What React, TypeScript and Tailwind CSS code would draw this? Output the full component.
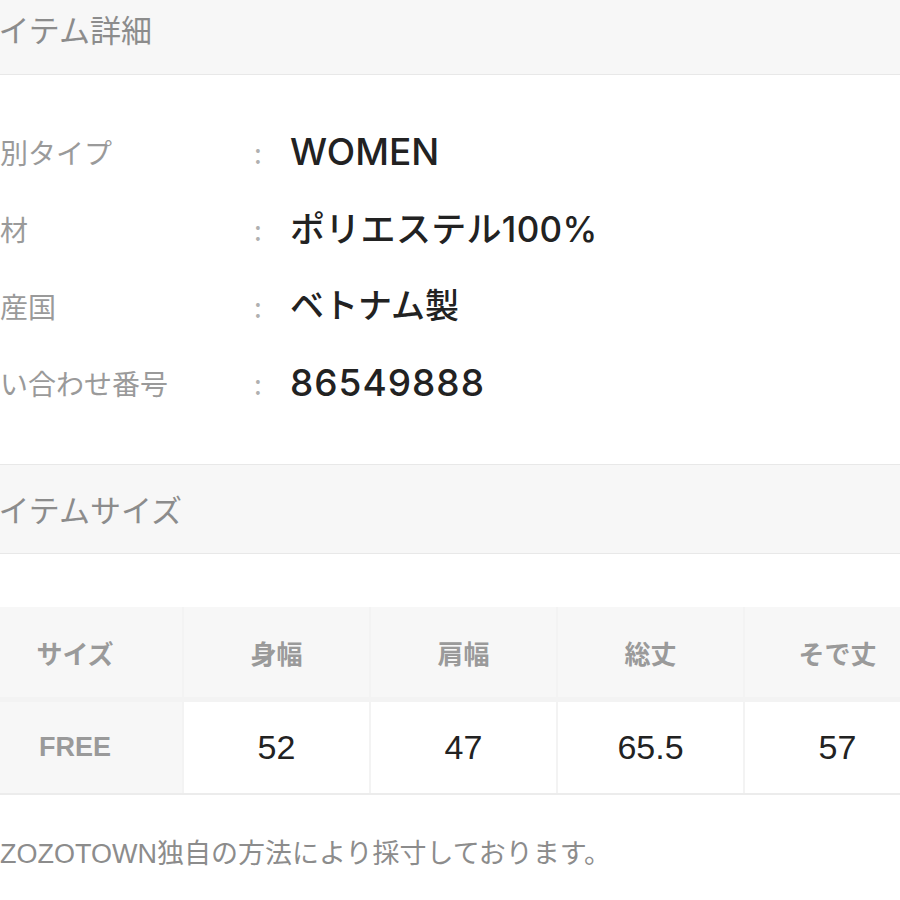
import React from "react";

const font = { fontFamily: '"Noto Sans CJK JP", "Liberation Sans", sans-serif' };
const latinFirst = { fontFamily: '"Liberation Sans", "Noto Sans CJK JP", sans-serif' };
const valFont = { fontFamily: 'Inter, "Noto Sans CJK JP", sans-serif' };

const rows: { k: string; v: string; cls: string }[] = [
  { k: "性別タイプ", v: "WOMEN", cls: "text-[37px] tracking-[0px]" },
  { k: "素材", v: "ポリエステル100%", cls: "text-[35px] tracking-[0.3px]" },
  { k: "原産国", v: "ベトナム製", cls: "text-[34px] tracking-[0px]" },
  { k: "問い合わせ番号", v: "86549888", cls: "text-[37px] tracking-[1px]" },
];

const heads = ["身幅", "肩幅", "総丈", "そで丈"];
const vals = ["52", "47", "65.5", "57"];

export default function App() {
  return (
    <div className="w-[900px] h-[900px] overflow-hidden bg-white relative" style={font}>
      {/* header 1 */}
      <div className="h-[75px] bg-[#f7f7f7] border-b border-[#e8e8e8] pt-[7px]">
        <div className="-ml-[31px] text-[31px] leading-[44px] text-[#8c8c8c] whitespace-nowrap">アイテム詳細</div>
      </div>

      {/* details */}
      <div className="pt-[38px] pb-[43px]">
        {rows.map(({ k, v, cls }) => (
          <div key={k} className="h-[77px] flex items-center">
            <div className="-ml-[28px] w-[282px] shrink-0 text-[28px] leading-[40px] text-[#9a9a9a] whitespace-nowrap">{k}</div>
            <div className="w-[36px] shrink-0 text-[28px] leading-[40px] text-[#b0b0b0]">:</div>
            <div className={`leading-[44px] font-medium text-[#222] whitespace-nowrap ${cls}`} style={valFont}>{v}</div>
          </div>
        ))}
      </div>

      {/* header 2 */}
      <div className="h-[90px] bg-[#f7f7f7] border-t border-b border-[#e8e8e8] flex items-center">
        <div className="-ml-[31px] text-[31px] leading-[44px] text-[#8c8c8c] whitespace-nowrap">アイテムサイズ</div>
      </div>

      {/* table */}
      <div className="mt-[53px] -ml-[32px] w-[962px] grid grid-cols-[214px_185px_185px_185px_185px] gap-x-[2px] gap-y-[5px] bg-[#f3f3f3] border-b-2 border-[#ececec]">
        <div className="h-[90px] bg-[#f7f7f7] flex items-center justify-center text-[26px] font-bold text-[#9a9a9a]">サイズ</div>
        {heads.map((h) => (
          <div key={h} className="h-[90px] bg-[#f7f7f7] flex items-center justify-center text-[26px] font-bold text-[#9a9a9a]">{h}</div>
        ))}
        <div className="h-[91px] bg-[#f7f7f7] flex items-center justify-center text-[27px] font-bold text-[#9a9a9a]" style={latinFirst}>FREE</div>
        {vals.map((v) => (
          <div key={v} className="h-[91px] bg-white flex items-center justify-center text-[34px] text-[#222]" style={latinFirst}>{v}</div>
        ))}
      </div>

      {/* footer note */}
      <div className="mt-[42px] -ml-[27px] text-[27px] leading-[34px] text-[#8c8c8c] whitespace-nowrap" style={latinFirst}>※ZOZOTOWN独自の方法により採寸しております。</div>
    </div>
  );
}
